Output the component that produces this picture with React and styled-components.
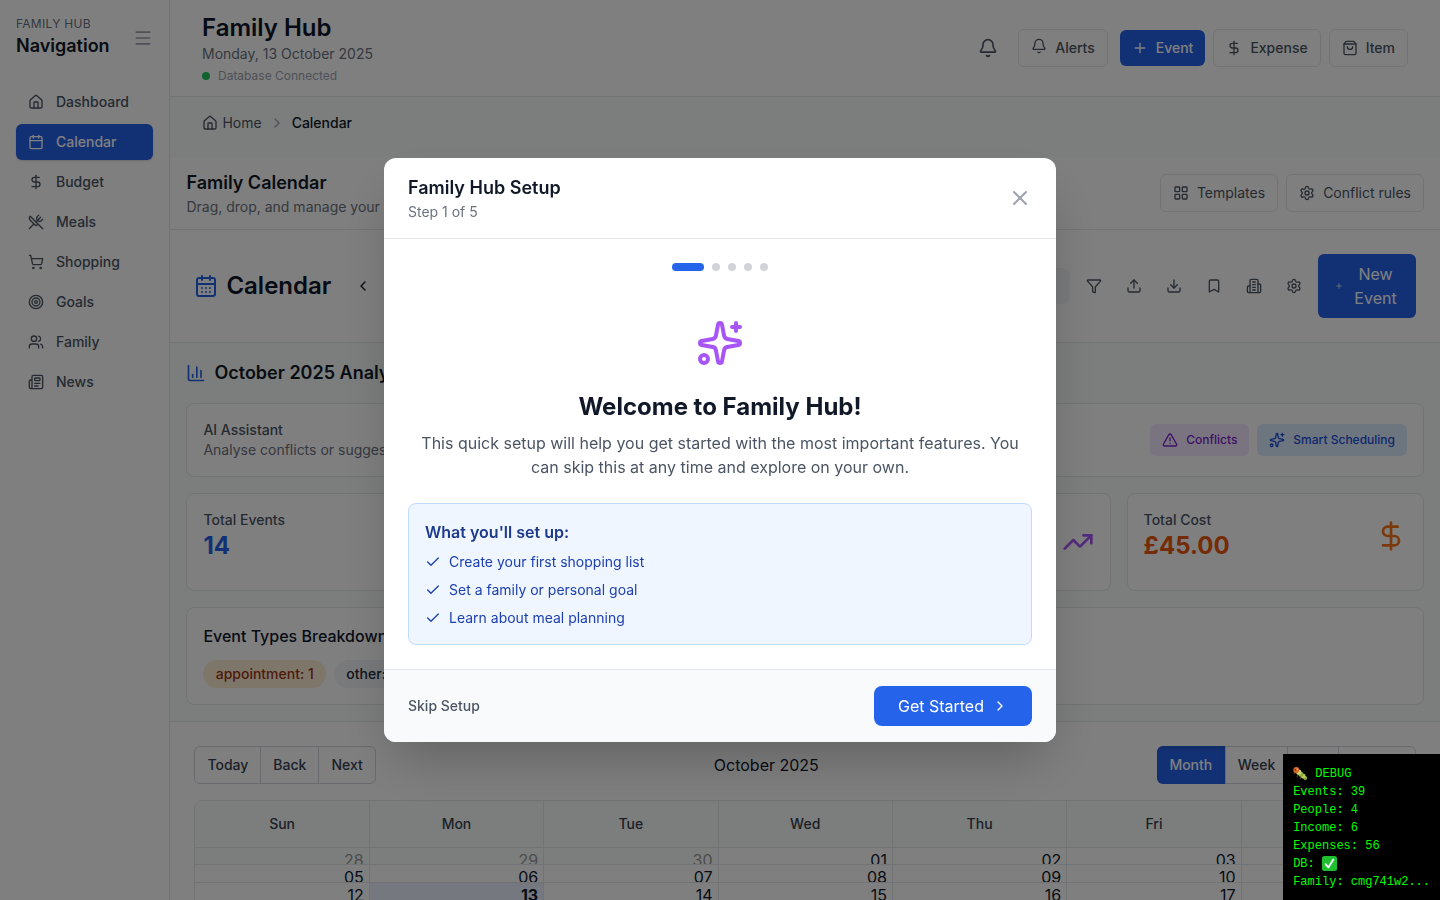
import React from 'react';
import styled, { createGlobalStyle, css } from 'styled-components';
import {
  House, Calendar, DollarSign, UtensilsCrossed, ShoppingCart, Target, Users, Newspaper,
  Menu, Bell, Plus, ShoppingBag, ChevronRight, ChevronLeft, LayoutGrid, Settings, CalendarDays,
  Funnel, Upload, Download, Bookmark, ChartColumn, TriangleAlert, TrendingUp, X, Check,
} from 'lucide-react';

const Global = createGlobalStyle`
  *, *::before, *::after { box-sizing: border-box; }
  html, body { margin: 0; height: 900px; overflow: hidden; }
  body {
    font-family: Inter, "Liberation Sans", sans-serif;
    font-size: 16px;
    line-height: 24px;
    color: #0f172a;
    background: #f8fcfa;
  }
  h1, h2, h3, p, ul { margin: 0; padding: 0; font-weight: inherit; }
  button { font: inherit; color: inherit; border: 0; background: none; padding: 0; }
  svg { display: block; flex-shrink: 0; }
`;

const line = '#e5e7eb';

const Shell = styled.div`
  display: flex;
  width: 1440px;
  height: 900px;
  overflow: hidden;
`;

const Sidebar = styled.aside`
  width: 170.4px;
  flex-shrink: 0;
  border-right: 1px solid ${line};
  background: #fff;
`;
const SidebarHead = styled.div`
  display: flex;
  justify-content: space-between;
  align-items: center;
  padding: 16px 16px 0;
  height: 60px;
  color: #9ca3af;
`;
const Eyebrow = styled.p`
  font-size: 12px;
  line-height: 16px;
  letter-spacing: 0.3px;
  color: #6b7280;
`;
const NavTitle = styled.h2`
  font-size: 18px;
  line-height: 28px;
  font-weight: 600;
  color: #111827;
`;
const NavList = styled.nav`
  display: flex;
  flex-direction: column;
  gap: 4px;
  padding: 24px 16px;
`;
const NavItem = styled.a`
  display: flex;
  align-items: center;
  gap: 12px;
  height: 36px;
  padding: 0 12px;
  border-radius: 6px;
  font-size: 14px;
  font-weight: 500;
  color: #4b5563;
  ${(p) => p.$active && css`
    color: #fff;
    background: #2563eb;
    box-shadow: 0 1px 2px rgba(0, 0, 0, 0.15);
  `}
`;

const Main = styled.main`
  flex: 1;
  min-width: 0;
  display: flex;
  flex-direction: column;
`;
const TopBar = styled.header`
  display: flex;
  justify-content: space-between;
  align-items: center;
  height: 97px;
  flex-shrink: 0;
  padding: 0 32px 0 31.6px;
  border-bottom: 1px solid ${line};
  background: #fff;
`;
const AppTitle = styled.h1`
  font-size: 24px;
  line-height: 32px;
  font-weight: 600;
`;
const Muted = styled.p`
  font-size: 14px;
  line-height: 20px;
  color: ${(p) => p.$color || '#6b7280'};
  white-space: nowrap;
`;
const DbStatus = styled.div`
  display: flex;
  align-items: center;
  gap: 8px;
  margin-top: 4px;
  font-size: 12px;
  line-height: 16px;
  color: #9ca3af;
`;
const GreenDot = styled.span`
  width: 8px;
  height: 8px;
  border-radius: 50%;
  background: #22c55e;
`;
const Actions = styled.div`
  display: flex;
  align-items: center;
  gap: 8px;
`;
const BellButton = styled.button`
  margin-right: 12px;
  color: #4b5563;
`;
const Button = styled.button`
  display: flex;
  align-items: center;
  gap: 8px;
  height: ${(p) => (p.$primary ? 36 : 38)}px;
  padding: 0 12px;
  border-radius: 6px;
  font-size: 14px;
  font-weight: ${(p) => p.$weight || 500};
  white-space: nowrap;
  margin-left: ${(p) => p.$ml || 0}px;
  color: ${(p) => (p.$primary ? '#fff' : '#4b5563')};
  background: ${(p) => (p.$primary ? '#2563eb' : 'transparent')};
  border: ${(p) => (p.$primary ? 0 : `1px solid ${line}`)};
`;
const RaisedIcon = styled.span`
  padding-bottom: 4px;
`;

const Crumbs = styled.div`
  display: flex;
  align-items: flex-start;
  height: 60px;
  flex-shrink: 0;
  padding: 16px 32px;
  font-size: 14px;
  line-height: 20px;
  color: #4b5563;
  svg { margin-top: 2px; }
`;
const CrumbHome = styled.span`
  display: flex;
  gap: 4px;
`;
const CrumbSep = styled.span`
  margin: 0 7px;
  color: #9ca3af;
`;
const CrumbHere = styled.span`
  font-weight: 500;
  color: #111827;
`;

const PageHead = styled.section`
  display: flex;
  justify-content: space-between;
  align-items: center;
  height: 73px;
  flex-shrink: 0;
  padding: 0 16px;
  border-bottom: 1px solid ${line};
  background: #fff;
`;
const SectionTitle = styled.h2`
  font-size: 18px;
  line-height: 28px;
  font-weight: 600;
  color: #111827;
`;

const ToolBar = styled.section`
  display: flex;
  justify-content: space-between;
  align-items: center;
  height: 113px;
  flex-shrink: 0;
  padding: 0 24px;
  border-bottom: 1px solid ${line};
  background: #fff;
`;
const ToolTitle = styled.div`
  display: flex;
  align-items: center;
  gap: 8px;
  font-size: 24px;
  line-height: 32px;
  font-weight: 600;
`;
const TitleIcon = styled.span`
  color: #2563eb;
`;
const PrevButton = styled.button`
  margin-left: 16px;
`;
const ToolActions = styled.div`
  display: flex;
  align-items: center;
  color: #4b5563;
`;
const SearchBox = styled.div`
  width: 200px;
  height: 36px;
  margin-right: 8px;
  border-radius: 8px;
  background: #f3f4f6;
`;
const IconButton = styled.button`
  width: 32px;
  height: 32px;
  display: grid;
  place-items: center;
  margin-right: 8px;
`;
const NewEvent = styled.button`
  display: flex;
  align-items: center;
  justify-content: center;
  gap: 11px;
  width: 98px;
  height: 64px;
  padding: 0 2px 0 0;
  border-radius: 6px;
  text-align: center;
  color: #fff;
  background: #2563eb;
`;
const NewEventText = styled.span`
  width: 44px;
`;

const Analytics = styled.section`
  display: flex;
  flex-direction: column;
  gap: 16px;
  flex-shrink: 0;
  padding: 16px;
  border-bottom: 1px solid ${line};
`;
const AnalyticsTitle = styled.div`
  display: flex;
  align-items: center;
  gap: 8px;
`;
const Card = styled.div`
  display: ${(p) => (p.$block ? 'block' : 'flex')};
  justify-content: space-between;
  align-items: ${(p) => p.$align || 'center'};
  padding: 16px;
  height: ${(p) => p.$h}px;
  border: 1px solid ${line};
  border-radius: 8px;
  background: #fff;
`;
const StatGrid = styled.div`
  display: grid;
  grid-template-columns: repeat(4, 1fr);
  gap: 16px;
`;
const StatIcon = styled.span`
  margin-top: ${(p) => p.$top || 0}px;
  color: ${(p) => p.$color};
`;
const Label = styled.p`
  font-size: 14px;
  line-height: 20px;
  font-weight: 500;
  color: #4b5563;
`;
const Value = styled.p`
  font-size: 24px;
  line-height: 32px;
  font-weight: 700;
  color: ${(p) => p.$color};
`;
const AiButton = styled.button`
  display: flex;
  align-items: center;
  gap: 8px;
  height: 32px;
  padding: 0 12px;
  border-radius: 6px;
  font-size: 12px;
  font-weight: 500;
  color: ${(p) => p.$color};
  background: ${(p) => p.$bg};
`;
const BreakTitle = styled.h3`
  font-size: 16px;
  font-weight: 500;
  margin-bottom: 12px;
`;
const Pills = styled.div`
  display: flex;
  gap: 8px;
`;
const Pill = styled.span`
  padding: 4px 12.3px;
  border-radius: 14px;
  font-size: 14px;
  line-height: 20px;
  font-weight: 500;
  color: ${(p) => p.$color};
  background: ${(p) => p.$bg};
`;

const CalendarArea = styled.section`
  flex: 1;
  padding: 24px;
  background: #fff;
`;
const CalBar = styled.div`
  display: flex;
  justify-content: space-between;
  align-items: center;
  margin-bottom: 16px;
`;
const CalLabel = styled.span`
  flex: 1;
  text-align: center;
`;
const Group = styled.div`
  display: flex;
  height: 38px;
  border: 1px solid #d1d5db;
  border-radius: 6px;
`;
const GroupButton = styled.button`
  padding: 0 12px;
  font-size: 14px;
  font-weight: 500;
  color: #374151;
  & + & { border-left: 1px solid #d1d5db; }
  ${(p) => p.$active && css`
    margin: -1px 0 -1px -1px;
    padding: 0 12.5px;
    border-radius: 6px 0 0 6px;
    color: #fff;
    background: #2563eb;
    box-shadow: inset 0 3px 5px rgba(0, 0, 0, 0.125);
  `}
`;
const Month = styled.div`
  height: 200px;
  border: 1px solid ${line};
  border-radius: 8px 8px 0 0;
  overflow: hidden;
`;
const WeekHead = styled.div`
  display: flex;
  height: 47px;
  border-bottom: 1px solid ${line};
  background: #f8fcfa;
`;
const DayName = styled.div`
  flex: 1 1 0;
  min-width: 0;
  display: grid;
  place-items: center;
  font-size: 14px;
  font-weight: 500;
  color: #374151;
  & + & { border-left: 1px solid ${line}; }
`;
const WeekRow = styled.div`
  display: flex;
  height: ${(p) => p.$h}px;
  overflow: hidden;
  & + & { border-top: 1px solid ${line}; }
`;
const DayCell = styled.div`
  flex: 1 1 0;
  min-width: 0;
  padding-right: 5px;
  text-align: right;
  color: ${(p) => (p.$off ? '#999' : '#0f172a')};
  font-weight: ${(p) => (p.$today ? 700 : 400)};
  background: ${(p) => (p.$off ? '#f8fcfa' : p.$today ? '#eaf2ff' : '#fff')};
  & + & { border-left: 1px solid ${line}; }
`;

const Overlay = styled.div`
  position: fixed;
  inset: 0;
  display: grid;
  place-items: center;
  background: rgba(0, 0, 0, 0.5);
`;
const Modal = styled.div`
  width: 672px;
  border-radius: 12px;
  overflow: hidden;
  background: #fff;
  box-shadow: 0 25px 50px -12px rgba(0, 0, 0, 0.25);
`;
const ModalHead = styled.div`
  display: flex;
  justify-content: space-between;
  align-items: center;
  padding: 16px 24px;
  border-bottom: 1px solid ${line};
`;
const CloseButton = styled.button`
  color: #9ca3af;
`;
const ModalBody = styled.div`
  display: flex;
  flex-direction: column;
  align-items: center;
  padding: 24px;
`;
const Steps = styled.div`
  display: flex;
  gap: 8px;
  margin-bottom: 48px;
`;
const Step = styled.span`
  width: ${(p) => (p.$on ? 32 : 8)}px;
  height: 8px;
  border-radius: 4px;
  background: ${(p) => (p.$on ? '#2563eb' : '#d1d5db')};
`;
const Hero = styled.span`
  color: #a855f7;
  margin-bottom: 24px;
`;
const Welcome = styled.h2`
  font-size: 24px;
  line-height: 32px;
  font-weight: 700;
  color: #111827;
  margin-bottom: 8px;
`;
const Intro = styled.p`
  text-align: center;
  color: #4b5563;
  margin-bottom: 24px;
`;
const InfoBox = styled.div`
  align-self: stretch;
  padding: 16px;
  border: 1px solid #bfdbfe;
  border-radius: 8px;
  background: #eff6ff;
`;
const InfoTitle = styled.h3`
  font-size: 16px;
  font-weight: 600;
  color: #1e3a8a;
  margin-bottom: 8px;
`;
const InfoList = styled.ul`
  display: flex;
  flex-direction: column;
  gap: 8px;
  list-style: none;
`;
const InfoItem = styled.li`
  display: flex;
  align-items: center;
  gap: 8px;
  font-size: 14px;
  line-height: 20px;
  color: #1e40af;
`;
const ModalFoot = styled.div`
  display: flex;
  justify-content: space-between;
  align-items: center;
  padding: 16px 24px;
  border-top: 1px solid ${line};
  background: #f9fafb;
`;
const Skip = styled.button`
  font-size: 14px;
  font-weight: 500;
  color: #4b5563;
`;
const Start = styled.button`
  display: flex;
  align-items: center;
  gap: 8px;
  height: 40px;
  padding: 0 24px;
  border-radius: 8px;
  color: #fff;
  background: #2563eb;
`;

const Debug = styled.div`
  position: fixed;
  right: 0;
  bottom: 0;
  padding: 11px 10px 9px;
  font-family: "Courier New", "Liberation Mono", monospace;
  font-size: 12px;
  line-height: 18px;
  color: #0f0;
  background: #000;
`;
const DebugLine = styled.div`
  display: flex;
  align-items: center;
  height: 18px;
  white-space: pre;
  svg { margin-top: -2px; }
`;

const Sparkles = ({ size }) => (
  <svg width={size} height={size} viewBox="0 0 24 24" fill="none" stroke="currentColor" strokeWidth="2" strokeLinecap="round" strokeLinejoin="round">
    <path d="M11.017 2.814a1 1 0 0 1 1.966 0l1.051 5.558a2 2 0 0 0 1.594 1.594l5.558 1.051a1 1 0 0 1 0 1.966l-5.558 1.051a2 2 0 0 0-1.594 1.594l-1.051 5.558a1 1 0 0 1-1.966 0l-1.051-5.558a2 2 0 0 0-1.594-1.594l-5.558-1.051a1 1 0 0 1 0-1.966l5.558-1.051a2 2 0 0 0 1.594-1.594z" />
    <path d="M20 2v4M22 4h-4" />
    <circle cx="4" cy="20" r="2" />
  </svg>
);

const Building = ({ size }) => (
  <svg width={size} height={size} viewBox="0 0 24 24" fill="none" stroke="currentColor" strokeWidth="2" strokeLinecap="round" strokeLinejoin="round">
    <path d="M6 22V4a2 2 0 0 1 2-2h8a2 2 0 0 1 2 2v18Z" />
    <path d="M6 12H4a2 2 0 0 0-2 2v6a2 2 0 0 0 2 2h2" />
    <path d="M18 9h2a2 2 0 0 1 2 2v9a2 2 0 0 1-2 2h-2" />
    <path d="M10 6h4M10 10h4M10 14h4M10 18h4" />
  </svg>
);

const Caterpillar = () => (
  <svg width="15" height="15" viewBox="0 0 15 15">
    <path d="M2 6l-1 2M5 9l-1 2M8 11l-1 2M4 2l1-1.5" stroke="#7a5a2a" strokeWidth="0.8" />
    <circle cx="12.2" cy="12" r="2" fill="#8fae3c" />
    <circle cx="10.2" cy="10.2" r="2.4" fill="#b9cf5a" />
    <circle cx="8" cy="8.2" r="2.5" fill="#8fae3c" />
    <circle cx="5.8" cy="6.2" r="2.6" fill="#c3d868" />
    <circle cx="3.2" cy="4" r="2.9" fill="#d9662b" />
    <circle cx="2.4" cy="3.8" r="0.8" fill="#5b2412" />
    <circle cx="4.5" cy="3.2" r="0.7" fill="#f7d9a0" />
  </svg>
);

const CheckBadge = () => (
  <svg width="15" height="15" viewBox="0 0 15 15">
    <rect width="15" height="15" rx="2.5" fill="#1fc02f" />
    <path d="M3.6 8.2l2.7 3.2 5-8" fill="none" stroke="#fff" strokeWidth="1.8" strokeLinecap="round" strokeLinejoin="round" />
  </svg>
);

const nav = [
  ['Dashboard', House], ['Calendar', Calendar], ['Budget', DollarSign], ['Meals', UtensilsCrossed],
  ['Shopping', ShoppingCart], ['Goals', Target], ['Family', Users], ['News', Newspaper],
];
const tools = [Funnel, Upload, Download, Bookmark, Building, Settings];
const weeks = [
  { h: 16, days: ['28', '29', '30', '01', '02', '03', '04'] },
  { h: 18, days: ['05', '06', '07', '08', '09', '10', '11'] },
  { h: 18, days: ['12', '13', '14', '15', '16', '17', '18'] },
];

export default function App() {
  return (
    <>
      <Global />
      <Shell>
        <Sidebar>
          <SidebarHead>
            <div>
              <Eyebrow>FAMILY HUB</Eyebrow>
              <NavTitle>Navigation</NavTitle>
            </div>
            <Menu size={20} />
          </SidebarHead>
          <NavList>
            {nav.map(([name, Icon]) => (
              <NavItem key={name} $active={name === 'Calendar'}><Icon size={16} />{name}</NavItem>
            ))}
          </NavList>
        </Sidebar>
        <Main>
          <TopBar>
            <div>
              <AppTitle>Family Hub</AppTitle>
              <Muted>Monday, 13 October 2025</Muted>
              <DbStatus><GreenDot />Database Connected</DbStatus>
            </div>
            <Actions>
              <BellButton><Bell size={20} /></BellButton>
              <Button><RaisedIcon><Bell size={16} /></RaisedIcon>Alerts</Button>
              <Button $primary $ml={4}><Plus size={16} />Event</Button>
              <Button><DollarSign size={16} />Expense</Button>
              <Button><ShoppingBag size={16} />Item</Button>
            </Actions>
          </TopBar>
          <Crumbs>
            <CrumbHome><House size={16} />Home</CrumbHome>
            <CrumbSep><ChevronRight size={16} /></CrumbSep>
            <CrumbHere>Calendar</CrumbHere>
          </Crumbs>
          <PageHead>
            <div>
              <SectionTitle>Family Calendar</SectionTitle>
              <Muted>Drag, drop, and manage your schedule</Muted>
            </div>
            <Actions>
              <Button $weight={400}><LayoutGrid size={16} />Templates</Button>
              <Button $weight={400}><Settings size={16} />Conflict rules</Button>
            </Actions>
          </PageHead>
          <ToolBar>
            <ToolTitle>
              <TitleIcon><CalendarDays size={24} /></TitleIcon>
              Calendar
              <PrevButton><ChevronLeft size={16} /></PrevButton>
            </ToolTitle>
            <ToolActions>
              <SearchBox />
              {tools.map((Icon, i) => <IconButton key={i}><Icon size={16} /></IconButton>)}
              <NewEvent><Plus size={8} /><NewEventText>New Event</NewEventText></NewEvent>
            </ToolActions>
          </ToolBar>
          <Analytics>
            <AnalyticsTitle>
              <TitleIcon><ChartColumn size={20} /></TitleIcon>
              <SectionTitle>October 2025 Analytics</SectionTitle>
            </AnalyticsTitle>
            <Card $h={74}>
              <div>
                <Label>AI Assistant</Label>
                <Muted>Analyse conflicts or suggest times</Muted>
              </div>
              <Actions>
                <AiButton $color="#7e22ce" $bg="#f3e8ff"><TriangleAlert size={16} />Conflicts</AiButton>
                <AiButton $color="#1d4ed8" $bg="#dbeafe"><Sparkles size={16} />Smart Scheduling</AiButton>
              </Actions>
            </Card>
            <StatGrid>
              <Card $h={98} $align="flex-start">
                <div><Label>Total Events</Label><Value $color="#2563eb">14</Value></div>
              </Card>
              <Card $h={98} />
              <Card $h={98} $align="flex-start">
                <div />
                <StatIcon $top={16} $color="#a855f7"><TrendingUp size={32} /></StatIcon>
              </Card>
              <Card $h={98} $align="flex-start">
                <div><Label>Total Cost</Label><Value $color="#ea580c">£45.00</Value></div>
                <StatIcon $top={10} $color="#f97316"><DollarSign size={32} /></StatIcon>
              </Card>
            </StatGrid>
            <Card $h={98} $block>
              <BreakTitle>Event Types Breakdown</BreakTitle>
              <Pills>
                <Pill $color="#9a3412" $bg="#ffedd5">appointment: 1</Pill>
                <Pill $color="#1f2937" $bg="#f3f4f6">other: 13</Pill>
              </Pills>
            </Card>
          </Analytics>
          <CalendarArea>
            <CalBar>
              <Group>
                <GroupButton>Today</GroupButton>
                <GroupButton>Back</GroupButton>
                <GroupButton>Next</GroupButton>
              </Group>
              <CalLabel>October 2025</CalLabel>
              <Group>
                <GroupButton $active>Month</GroupButton>
                <GroupButton>Week</GroupButton>
                <GroupButton>Day</GroupButton>
                <GroupButton>Agenda</GroupButton>
              </Group>
            </CalBar>
            <Month>
              <WeekHead>
                {['Sun', 'Mon', 'Tue', 'Wed', 'Thu', 'Fri', 'Sat'].map((d) => <DayName key={d}>{d}</DayName>)}
              </WeekHead>
              {weeks.map((w, r) => (
                <WeekRow key={r} $h={w.h}>
                  {w.days.map((d) => (
                    <DayCell key={d} $off={r === 0 && +d > 20} $today={d === '13'}>{d}</DayCell>
                  ))}
                </WeekRow>
              ))}
            </Month>
          </CalendarArea>
        </Main>
      </Shell>
      <Overlay>
        <Modal>
          <ModalHead>
            <div>
              <SectionTitle>Family Hub Setup</SectionTitle>
              <Muted>Step 1 of 5</Muted>
            </div>
            <CloseButton><X size={24} /></CloseButton>
          </ModalHead>
          <ModalBody>
            <Steps>{[0, 1, 2, 3, 4].map((n) => <Step key={n} $on={n === 0} />)}</Steps>
            <Hero><Sparkles size={48} /></Hero>
            <Welcome>Welcome to Family Hub!</Welcome>
            <Intro>This quick setup will help you get started with the most important features. You can skip this at any time and explore on your own.</Intro>
            <InfoBox>
              <InfoTitle>What you'll set up:</InfoTitle>
              <InfoList>
                <InfoItem><Check size={16} />Create your first shopping list</InfoItem>
                <InfoItem><Check size={16} />Set a family or personal goal</InfoItem>
                <InfoItem><Check size={16} />Learn about meal planning</InfoItem>
              </InfoList>
            </InfoBox>
          </ModalBody>
          <ModalFoot>
            <Skip>Skip Setup</Skip>
            <Start>Get Started<ChevronRight size={16} /></Start>
          </ModalFoot>
        </Modal>
      </Overlay>
      <Debug>
        <DebugLine><Caterpillar /><span> DEBUG</span></DebugLine>
        <DebugLine>Events: 39</DebugLine>
        <DebugLine>People: 4</DebugLine>
        <DebugLine>Income: 6</DebugLine>
        <DebugLine>Expenses: 56</DebugLine>
        <DebugLine><span>DB: </span><CheckBadge /></DebugLine>
        <DebugLine>Family: cmg741w2...</DebugLine>
      </Debug>
    </>
  );
}
